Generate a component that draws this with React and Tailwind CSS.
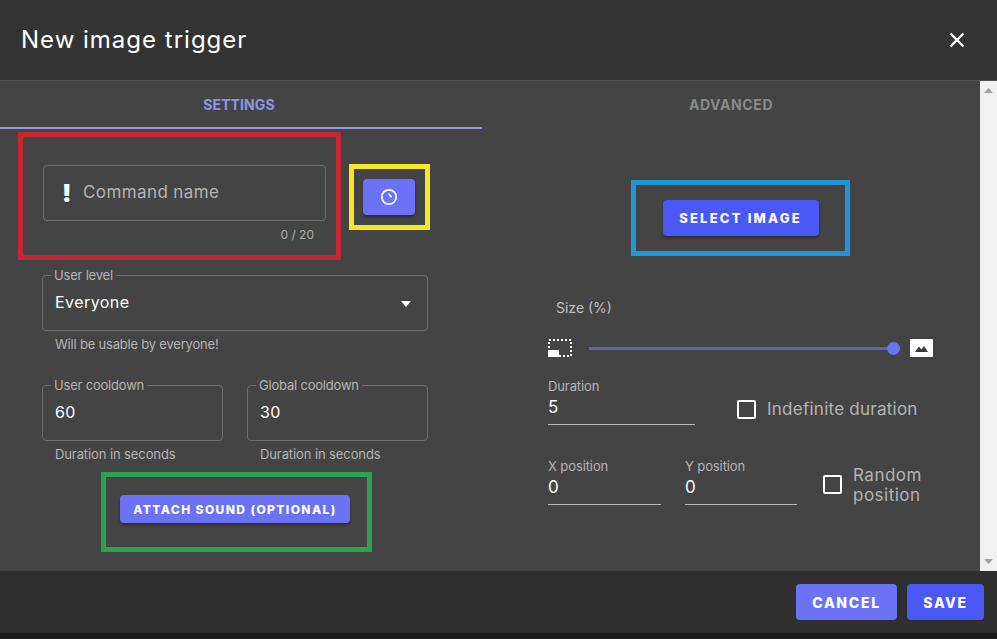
const font = { fontFamily: '"Inter","Noto Sans",sans-serif' };

function Outlined({ label, value, className, children }) {
  return (
    <div className={className}>
      <div className="relative h-14 rounded border border-[#6e6e6e] pl-3 pr-3 pt-[14px]">
        <span className="absolute left-[8px] top-[-9px] bg-[#444444] px-[3px] text-[13px] leading-4 tracking-[-0.2px] text-[#b4b4b4]">{label}</span>
        <div className="flex items-center justify-between text-[16px] leading-6 tracking-[0.45px] text-white">
          <span>{value}</span>
          {children}
        </div>
      </div>
    </div>
  );
}

function Underlined({ label, value, className }) {
  return (
    <div className={className}>
      <div className="text-[13px] leading-4 tracking-[-0.1px] text-[#b4b4b4]">{label}</div>
      <div className="mt-[1px] h-[30px] border-b border-[#b8b8b8] text-[17px] leading-[24px] text-white">{value}</div>
    </div>
  );
}

export default function App() {
  return (
    <div style={font} className="flex h-[639px] w-[997px] flex-col overflow-hidden bg-[#1c1c1c]">
      <header className="flex h-[81px] shrink-0 items-center justify-between border-b border-[#4f4f4f] bg-[#333333] pl-[21px] pr-[32px]">
        <h1 className="text-[24px] font-normal leading-8 tracking-[1px] text-white">New image trigger</h1>
        <svg width="16" height="16" viewBox="0 0 16 16" fill="none" stroke="#fff" strokeWidth="2.4">
          <path d="M1.5 1.5 14.5 14.5M14.5 1.5 1.5 14.5" />
        </svg>
      </header>

      <div className="flex h-[490px] shrink-0 bg-[#444444]">
        <main className="flex w-[980px] flex-col">
          <div className="flex h-12 shrink-0 text-[14px] font-bold">
            <div className="flex w-[482px] items-center justify-center border-b-2 border-[#9298e6] pr-[4px] pt-[1px] tracking-[0.1px] text-[#8f95e6]">SETTINGS</div>
            <div className="flex flex-1 items-center justify-center pb-[1px] tracking-[0.6px] text-[#8a8a8a]">ADVANCED</div>
          </div>

          <div className="flex flex-1">
            {/* Settings column */}
            <section className="w-[482px] pl-[42px]">
              <div className="ml-[-24px] mt-[3px] flex">
                <div className="h-32 w-[323px] border-[5px] border-[#c4272f] pl-5 pt-7">
                  <div className="flex h-14 w-[283px] items-center rounded border border-[#6e6e6e] pl-[18px]">
                    <span className="w-[21px] text-[25px] font-black leading-6 text-white">!</span>
                    <span className="text-[17px] tracking-[0.4px] text-[#b4b4b4]">Command name</span>
                  </div>
                  <div className="mt-[6px] w-[271px] text-right text-[12px] leading-4 text-[#b0b0b0]">0 / 20</div>
                </div>
                <div className="ml-2 mt-8 flex h-[66px] w-[81px] items-center justify-center border-[5px] border-[#f7e625] pr-[2px]">
                  <button className="flex h-9 w-[52px] items-center justify-center rounded bg-[#6c72f5] shadow-[0_2px_3px_rgba(0,0,0,0.35)]">
                    <svg width="18" height="18" viewBox="0 0 18 18" fill="none" stroke="#fff" strokeWidth="1.7">
                      <circle cx="9" cy="9" r="7.2" />
                      <path d="M9 6.2 11.2 8.6" strokeLinecap="round" />
                    </svg>
                  </button>
                </div>
              </div>

              <Outlined className="mt-[15px] w-[386px]" label="User level" value="Everyone">
                <svg width="12" height="6" viewBox="0 0 12 6" className="mr-[3px] mt-[3px]"><path d="M1 0h10L6 6z" fill="#fff" /></svg>
              </Outlined>
              <p className="ml-[13px] mt-[5px] text-[13px] leading-4 tracking-[-0.2px] text-[#b4b4b4]">Will be usable by everyone!</p>

              <div className="mt-[33px] flex gap-[24px]">
                <div className="w-[181px]">
                  <Outlined label="User cooldown" value="60" />
                  <p className="ml-[13px] mt-[5px] text-[13px] leading-4 tracking-[-0.1px] text-[#b4b4b4]">Duration in seconds</p>
                </div>
                <div className="w-[181px]">
                  <Outlined label="Global cooldown" value="30" />
                  <p className="ml-[13px] mt-[5px] text-[13px] leading-4 tracking-[-0.1px] text-[#b4b4b4]">Duration in seconds</p>
                </div>
              </div>

              <div className="ml-[59px] mt-[10px] h-20 w-[271px] border-[5px] border-[#2aa24e] pl-[14px] pt-[18px]">
                <button className="h-7 w-[230px] rounded bg-[#6c72f5] pt-[1px] text-[12px] font-extrabold tracking-[1.4px] text-white shadow-[0_2px_3px_rgba(0,0,0,0.35)]">ATTACH SOUND (OPTIONAL)</button>
              </div>
            </section>

            {/* Advanced column */}
            <section className="flex-1 pl-[66px]">
              <div className="ml-[83px] mt-[51px] flex h-[76px] w-[219px] items-center justify-center border-[5px] border-[#1f97d4]">
                <button className="h-9 w-[156px] rounded bg-[#4a58f6] pt-[1px] text-[13px] font-extrabold tracking-[2.2px] text-white shadow-[0_2px_3px_rgba(0,0,0,0.35)]">SELECT IMAGE</button>
              </div>

              <p className="ml-2 mt-[42px] text-[14px] leading-5 text-[#c0c0c0]">Size (%)</p>

              <div className="mt-[21px] flex h-[18px] w-[385px] items-center">
                <svg width="24" height="18" viewBox="0 0 24 18" fill="none">
                  <rect x="1" y="1" width="22" height="16" stroke="#fff" strokeWidth="2" strokeDasharray="2 2" />
                  <rect x="0" y="11" width="11" height="7" fill="#fff" />
                </svg>
                <div className="relative ml-[17px] h-[3px] w-[304px] bg-[#5f65bd]">
                  <span className="absolute right-[-7px] top-[-5px] h-[13px] w-[13px] rounded-full bg-[#6c72f5]" />
                </div>
                <svg width="23" height="18" viewBox="0 0 23 18" className="ml-[17px]">
                  <rect width="23" height="18" rx="1" fill="#fff" />
                  <path d="M5 13 9 7.5 11.5 10.5 14 7 18 13z" fill="#3a3a3a" />
                </svg>
              </div>

              <div className="mt-[21px] flex w-[385px]">
                <Underlined className="w-[147px]" label="Duration" value="5" />
                <label className="ml-[42px] mt-[21px] flex h-5 items-center">
                  <span className="h-[19px] w-[19px] rounded-[2px] border-2 border-white" />
                  <span className="ml-[11px] pt-[2px] text-[17px] tracking-[0.25px] text-[#b4b4b4]">Indefinite duration</span>
                </label>
              </div>

              <div className="mt-[33px] flex">
                <Underlined className="w-[113px]" label="X position" value="0" />
                <Underlined className="ml-[24px] w-[112px]" label="Y position" value="0" />
                <label className="ml-[26px] mt-[5px] flex items-center">
                  <span className="h-[19px] w-[19px] rounded-[2px] border-2 border-white" />
                  <span className="ml-[11px] w-[90px] pt-[2px] text-[17px] leading-5 tracking-[0.5px] text-[#b4b4b4]">Random position</span>
                </label>
              </div>
            </section>
          </div>
        </main>

        <aside className="flex w-[17px] flex-col items-center justify-between bg-[#f1f1f1] py-[7px]">
          <svg width="9" height="5" viewBox="0 0 9 5"><path d="M0 5 4.5 0 9 5z" fill="#a3a3a3" /></svg>
          <svg width="9" height="5" viewBox="0 0 9 5"><path d="M0 0 4.5 5 9 0z" fill="#a3a3a3" /></svg>
        </aside>
      </div>

      <footer className="flex h-[62px] shrink-0 items-center justify-end gap-[10px] bg-[#2f2f2f] pr-[13px]">
        <button className="h-9 w-[101px] rounded bg-[#6c72f5] text-[14px] font-extrabold tracking-[1.7px] text-white">CANCEL</button>
        <button className="h-9 w-[77px] rounded bg-[#4a58f6] text-[14px] font-extrabold tracking-[1.6px] text-white">SAVE</button>
      </footer>
    </div>
  );
}
